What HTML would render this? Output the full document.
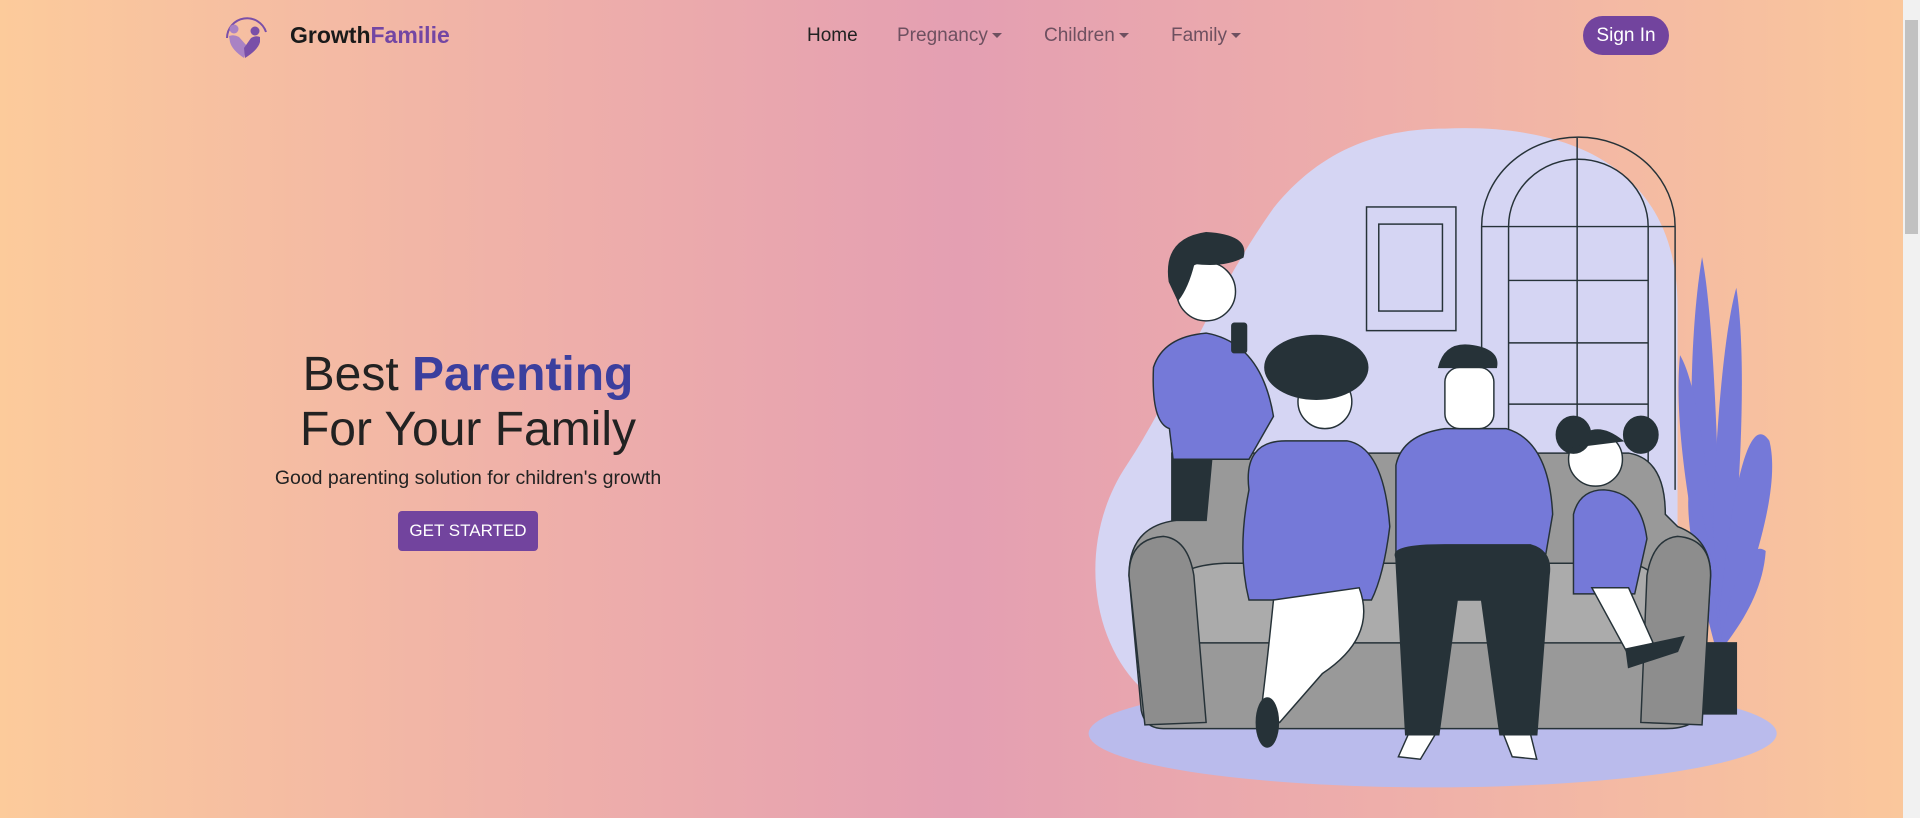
<!DOCTYPE html>
<html><head><meta charset="utf-8"><style>
*{margin:0;padding:0;box-sizing:border-box}
body{width:1920px;height:818px;overflow:hidden;font-family:"Liberation Sans",sans-serif;background:linear-gradient(90deg,#fccb9b 0%,#eeaeaa 30%,#e49fb2 50%,#eeaeaa 72%,#fbc89b 100%);position:relative}
.abs{position:absolute}
.nav{top:25px;font-size:19px;color:#6e5060;white-space:nowrap}
.caret{display:inline-block;width:0;height:0;border-left:5px solid transparent;border-right:5px solid transparent;border-top:5px solid #6e5060;vertical-align:middle;margin-left:4px}
</style></head><body>
<svg class="abs" style="left:222px;top:12px" width="48" height="48" viewBox="0 0 48 48">
<path d="M5 26 A20 20 0 0 1 44 20" fill="none" stroke="#7a4fa8" stroke-width="2"/>
<circle cx="12" cy="17" r="4.5" fill="#a982c4"/><circle cx="33" cy="19" r="4.5" fill="#7a4fa8"/>
<path d="M7 24 Q12 22 17 25 L25 34 L22 46 Q10 38 8 30 Z" fill="#a982c4"/><path d="M38 25 Q34 23 29 26 L22 36 L23 46 Q36 38 38 30 Z" fill="#7a4fa8"/>
</svg>
<div class="abs" style="left:290px;top:22px;font-size:23px;font-weight:bold;color:#1a1a1a">Growth<span style="color:#7346a3">Familie</span></div>
<div class="abs nav" style="left:807px;color:#222">Home</div>
<div class="abs nav" style="left:897px">Pregnancy<span class="caret"></span></div>
<div class="abs nav" style="left:1044px">Children<span class="caret"></span></div>
<div class="abs nav" style="left:1171px">Family<span class="caret"></span></div>
<div class="abs" style="left:1583px;top:16px;width:86px;height:39px;border-radius:20px;background:#72449e;color:#fff;font-size:19px;line-height:39px;text-align:center">Sign In</div>
<div class="abs" style="left:168px;width:600px;top:347px;text-align:center;font-size:48px;line-height:55px;color:#222">Best <b style="color:#3b3f9e">Parenting</b><br>For Your Family</div>
<div class="abs" style="left:168px;width:600px;top:467px;text-align:center;font-size:19.5px;color:#222">Good parenting solution for children's growth</div>
<div class="abs" style="left:398px;top:511px;width:140px;height:40px;border-radius:4px;background:#72449e;color:#fff;font-size:17px;line-height:40px;text-align:center">GET STARTED</div>
<svg class="abs" style="left:0;top:0" width="1920" height="818" viewBox="0 0 1568 668">
<g stroke="#263238" stroke-width="1.2">
<path d="M1180 105 C1300 100 1370 150 1370 250 L1370 560 L930 560 C890 520 880 440 920 380 C960 320 990 240 1040 170 C1080 120 1130 105 1180 105Z" fill="#d5d5f3" stroke="none"/>
<ellipse cx="1170" cy="599" rx="281" ry="44" fill="#babbec" stroke="none"/>
<rect x="1116" y="169" width="73" height="101" fill="none"/><rect x="1126" y="183" width="52" height="71" fill="none"/>
<path d="M1210 400 V185 A79 73 0 0 1 1368 185 V400 M1232 400 V185 A57 55 0 0 1 1346 185 V400 M1288 112 V400 M1210 185 H1368 M1232 229 H1346 M1232 280 H1346 M1232 330 H1346" fill="none"/>
<g fill="#7579d8" stroke="none">
<path d="M1400 525 C1380 450 1375 300 1390 210 C1400 260 1405 400 1405 525Z"/>
<path d="M1400 525 C1395 420 1405 280 1418 235 C1428 300 1420 430 1408 525Z"/>
<path d="M1402 525 C1410 430 1425 330 1445 360 C1455 400 1430 470 1410 525Z"/>
<path d="M1402 525 C1390 470 1365 360 1372 290 C1390 320 1400 430 1406 525Z"/>
<path d="M1405 525 C1415 470 1430 440 1442 450 C1440 480 1425 505 1410 525Z"/>
<path d="M1400 525 C1385 470 1375 420 1380 395 C1395 420 1400 470 1404 525Z"/>
</g>
<rect x="1386" y="525" width="32" height="58" fill="#263238"/>
<path d="M975 380 Q975 370 1000 370 L1330 370 Q1360 375 1360 420 L1370 430 Q1397 440 1397 470 L1390 580 Q1385 595 1360 595 L950 595 Q935 595 932 580 L922 470 Q922 430 960 425 Z" fill="#999"/>
<path d="M958 480 Q960 462 1000 460 L1330 460 Q1360 465 1350 490 L1345 525 L965 525 Z" fill="#ababab"/>
<path d="M922 470 Q922 440 950 438 Q970 440 975 470 L985 590 L935 592 Z" fill="#8d8d8d"/>
<path d="M1397 470 Q1397 440 1370 438 Q1350 440 1345 470 L1340 590 L1390 592 Z" fill="#8d8d8d"/>
<path d="M957 370 L990 370 L985 425 L957 425Z" fill="#263238"/>
<path d="M942 300 Q950 275 985 272 Q1030 280 1040 340 L1020 375 L958 375 L955 350 Q940 345 942 300Z" fill="#7579d8"/>
<circle cx="985" cy="238" r="24" fill="#fff"/><path d="M955 230 Q950 195 985 190 Q1020 192 1015 210 Q1000 218 975 215 Q970 235 962 245Z" fill="#263238"/>
<rect x="1006" y="264" width="12" height="24" rx="2" fill="#263238"/>
<path d="M1020 400 Q1015 360 1050 360 L1100 360 Q1130 365 1135 430 Q1130 470 1120 490 L1020 490 Q1010 450 1020 400Z" fill="#7579d8"/>
<path d="M1040 490 L1110 480 Q1125 520 1080 550 L1045 590 L1030 580 Q1035 540 1040 490Z" fill="#fff"/>
<ellipse cx="1035" cy="590" rx="9" ry="20" fill="#263238"/>
<circle cx="1082" cy="328" r="22" fill="#fff"/><ellipse cx="1075" cy="300" rx="42" ry="26" fill="#263238"/>
<path d="M1140 380 Q1145 355 1180 350 L1230 350 Q1265 360 1268 420 L1262 455 L1140 455Z" fill="#7579d8"/>
<path d="M1140 455 Q1135 445 1180 445 L1250 445 Q1268 450 1265 470 L1255 600 L1225 600 L1210 490 L1190 490 L1175 600 L1148 600 Z" fill="#263238"/>
<path d="M1150 600 L1172 600 L1160 620 L1142 618Z M1228 600 L1250 600 L1255 620 L1235 618Z" fill="#fff"/>
<rect x="1180" y="300" width="40" height="50" rx="12" fill="#fff"/><path d="M1175 300 Q1180 280 1200 282 Q1225 285 1222 300 Z" fill="#263238"/>
<path d="M1285 420 Q1290 400 1310 400 Q1340 402 1345 440 L1335 485 L1285 485 Z" fill="#7579d8"/>
<path d="M1300 480 L1330 480 L1350 525 L1330 535 Z" fill="#fff"/>
<path d="M1328 530 L1375 520 L1370 532 L1330 545Z" fill="#263238"/>
<circle cx="1303" cy="375" r="22" fill="#fff"/><ellipse cx="1285" cy="355" rx="14" ry="15" fill="#263238"/><ellipse cx="1340" cy="355" rx="14" ry="15" fill="#263238"/><path d="M1285 365 Q1300 340 1325 360 Z" fill="#263238"/>
</g>
</svg>
<div class="abs" style="left:1903px;top:0;width:17px;height:818px;background:#f1f1f1"></div>
<div class="abs" style="left:1905px;top:20px;width:13px;height:214px;background:#c1c1c1"></div>
</body></html>
